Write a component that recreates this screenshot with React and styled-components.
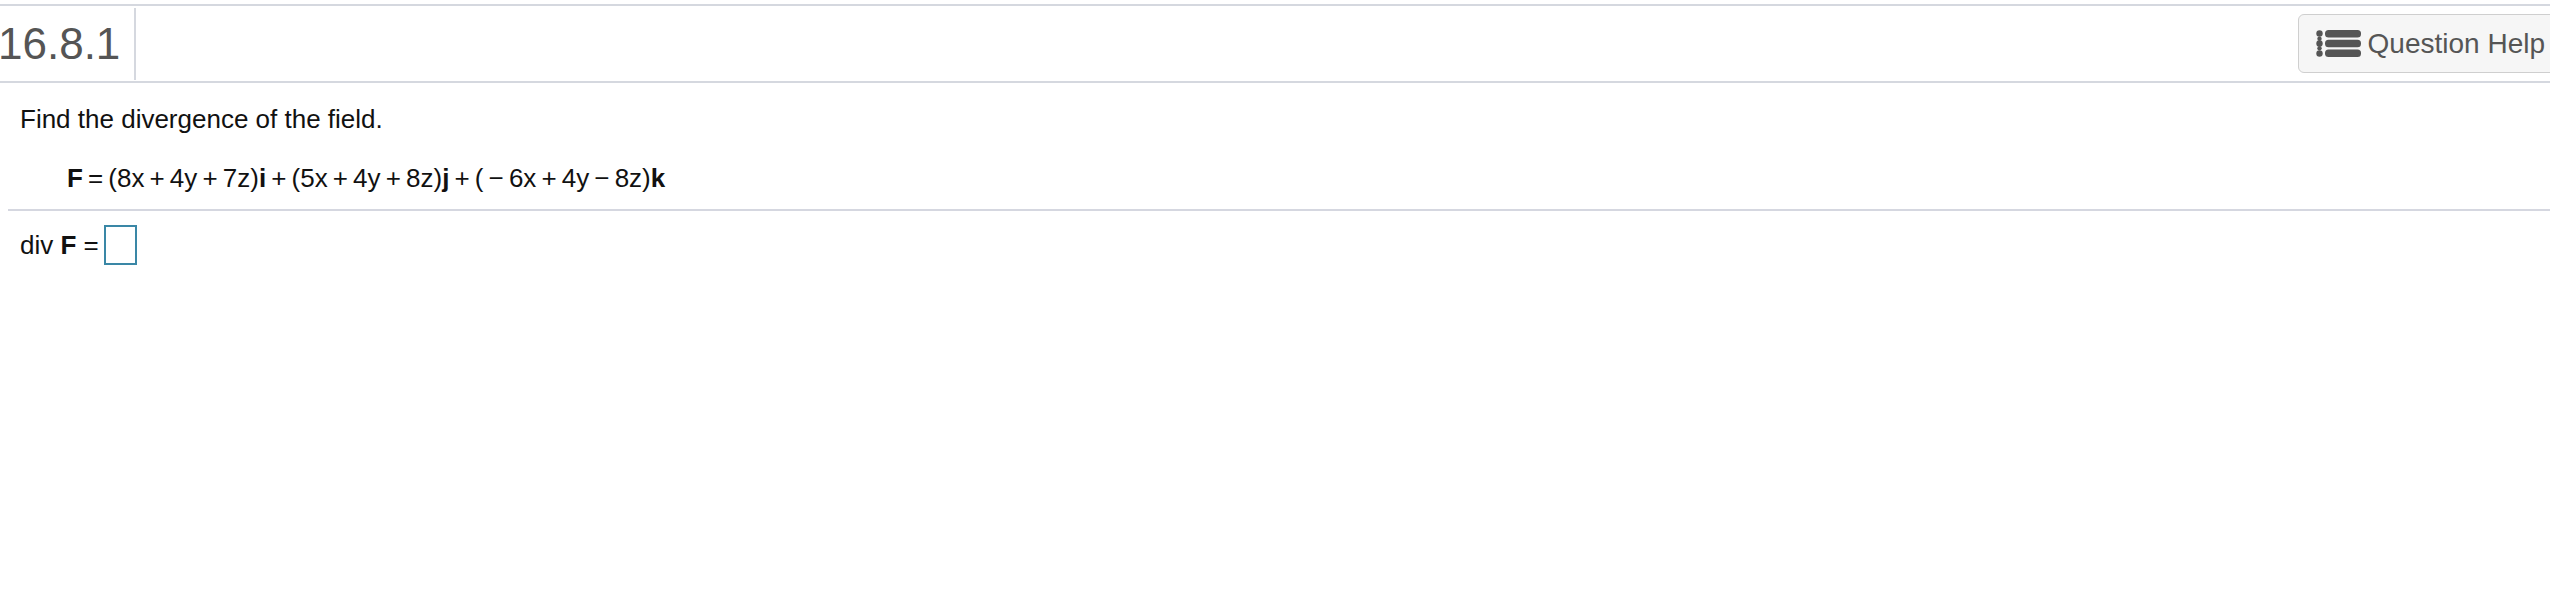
import React from "react";
import styled, { createGlobalStyle } from "styled-components";

const GlobalStyle = createGlobalStyle`
  html, body {
    margin: 0;
    padding: 0;
    background: #fff;
    overflow: hidden;
  }
  body {
    font-family: "Liberation Sans", Arial, Helvetica, sans-serif;
    color: #111;
  }
`;

const Page = styled.div`
  padding-top: 4px;
  width: 2550px;
`;

const Header = styled.div`
  display: flex;
  align-items: center;
  justify-content: space-between;
  height: 75px;
  border-top: 2px solid #d5d8df;
  border-bottom: 2px solid #d5d8df;
`;

const QuestionNumber = styled.div`
  display: flex;
  align-items: center;
  height: 72px;
  margin-left: -2px;
  padding-right: 14px;
  border-right: 2px solid #d5d8df;
  font-size: 44px;
  color: #555;
`;

const HelpButton = styled.button`
  display: flex;
  align-items: center;
  gap: 7px;
  height: 59px;
  margin-right: -10px;
  padding: 0 14px 0 17px;
  border: 1px solid #cfcfcf;
  border-radius: 6px;
  background: #f6f6f6;
  font-family: "Liberation Sans", Arial, sans-serif;
  font-size: 28px;
  color: #555;
  cursor: pointer;
`;

const Content = styled.div`
  padding-top: 21px;
`;

const Line = styled.div`
  font-size: 26px;
  line-height: 30px;
  padding-left: ${(p) => p.$indent || 20}px;
  margin-bottom: ${(p) => p.$gap || 0}px;
  white-space: nowrap;
  word-spacing: ${(p) => p.$wordSpacing || 0}px;
`;

const Bold = styled.b`
  font-weight: bold;
`;

const Divider = styled.hr`
  margin: 0 0 0 8px;
  border: 0;
  border-top: 2px solid #d5d7e0;
`;

const AnswerRow = styled.div`
  display: flex;
  align-items: center;
  padding: 14px 0 0 20px;
  font-size: 26px;
  line-height: 30px;
`;

const AnswerBox = styled.span`
  display: inline-block;
  width: 29px;
  height: 36px;
  margin-left: 5px;
  border: 2px solid #3a87a6;
`;

const ListIcon = () => (
  <svg width="45" height="27" viewBox="0 0 45 27" fill="#555">
    <circle cx="3.5" cy="3.5" r="3.2" />
    <circle cx="3.5" cy="8.7" r="2.2" />
    <circle cx="3.5" cy="13.5" r="3.2" />
    <circle cx="3.5" cy="18.3" r="2.2" />
    <circle cx="3.5" cy="23.5" r="3.2" />
    <rect x="9" y="0" width="36" height="7.5" rx="3.5" />
    <rect x="9" y="9.8" width="36" height="7.5" rx="3.5" />
    <rect x="9" y="19.5" width="36" height="7.5" rx="3.5" />
  </svg>
);

export default function App() {
  return (
    <Page>
      <GlobalStyle />
      <Header>
        <QuestionNumber>16.8.1</QuestionNumber>
        <HelpButton>
          <ListIcon />
          Question Help
        </HelpButton>
      </Header>
      <Content>
        <Line $gap={29}>Find the divergence of the field.</Line>
        <Line $indent={67} $gap={16} $wordSpacing={-2.1}>
          <Bold>F</Bold> = (8x + 4y + 7z)<Bold>i</Bold> + (5x + 4y + 8z)<Bold>j</Bold> + ( − 6x + 4y − 8z)<Bold>k</Bold>
        </Line>
        <Divider />
        <AnswerRow>
          div&nbsp;<Bold>F</Bold>&nbsp;=
          <AnswerBox />
        </AnswerRow>
      </Content>
    </Page>
  );
}
